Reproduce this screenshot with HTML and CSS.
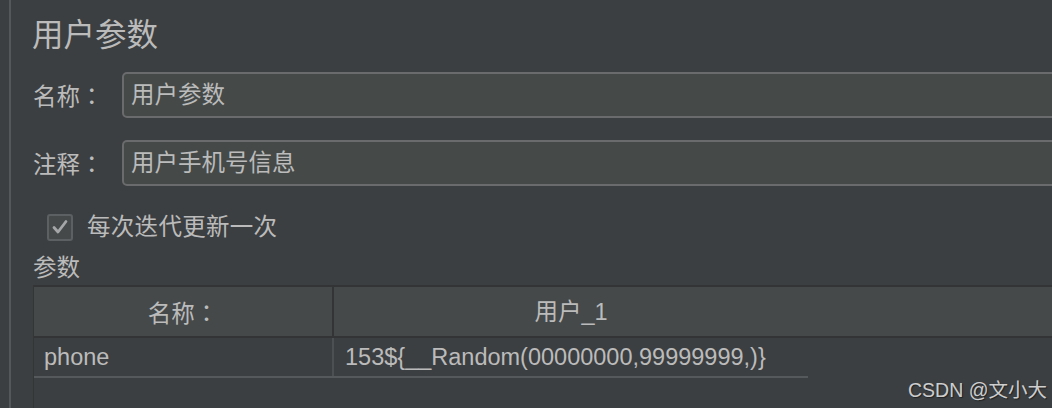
FILE: index.html
```html
<!DOCTYPE html>
<html lang="zh">
<head>
<meta charset="utf-8">
<title>用户参数</title>
<link rel="stylesheet" href="styles.css">
</head>
<body>
<div class="page">
  <div class="panel">
    <h1 class="title">用户参数</h1>
    <div class="field">
      <span class="label">名称<span class="colon">：</span></span>
      <div class="input">用户参数</div>
    </div>
    <div class="field field-second">
      <span class="label">注释<span class="colon">：</span></span>
      <div class="input">用户手机号信息</div>
    </div>
    <div class="check-row">
      <span class="checkbox">
        <svg width="18" height="18" viewBox="0 0 18 18"><path d="M3 9.5 L7 14 L15 3.5" fill="none" stroke="#a4a6a7" stroke-width="2.8" stroke-linecap="round" stroke-linejoin="round"/></svg>
      </span>
      <span class="check-label">每次迭代更新一次</span>
    </div>
    <div class="section">参数</div>
    <div class="table">
      <div class="thead">
        <div class="th th-name">名称<span class="colon">：</span></div>
        <div class="th th-user">用户_1</div>
        <div class="th th-rest"></div>
      </div>
      <div class="trow">
        <div class="td td-name">phone</div>
        <div class="td td-user">153${__Random(00000000,99999999,)}</div>
      </div>
    </div>
  </div>
  <div class="watermark">CSDN @文小大</div>
</div>
</body>
</html>
```

FILE: styles.css
```css
* { box-sizing: border-box; }
html, body {
  margin: 0;
  padding: 0;
  background: #3c3f41;
}
.page {
  position: relative;
  width: 1052px;
  height: 408px;
  overflow: hidden;
  background: #3c3f41;
  font-family: "Liberation Sans", "Noto Sans CJK SC", sans-serif;
  color: #bbbbbb;
}
.colon {
  font-family: "Noto Sans CJK TC", sans-serif;
  display: inline-block;
}
.panel {
  margin-left: 9px;
  height: 408px;
  border-left: 2px solid #55585a;
  padding-left: 21px;
  display: flex;
  flex-direction: column;
}
.title {
  margin: 17px 0 0 0;
  font-size: 31.5px;
  font-weight: normal;
  line-height: 36px;
  height: 36px;
}
.field {
  display: flex;
  align-items: center;
  margin-top: 19px;
  width: 1100px;
}
.field-second { margin-top: 22px; }
.label {
  width: 90px;
  flex: none;
  font-size: 23.5px;
  line-height: 30px;
  padding-left: 1px;
  padding-top: 2px;
  white-space: nowrap;
}
.input {
  flex: 1;
  height: 46px;
  border: 2px solid #696b6d;
  border-radius: 5px;
  background: #454a49;
  padding-left: 7px;
  font-size: 23.5px;
  line-height: 43px;
  color: #bbbbbb;
}
.check-row {
  display: flex;
  align-items: center;
  margin-top: 27px;
  margin-left: 15px;
  height: 28px;
}
.checkbox {
  width: 26px;
  height: 27px;
  border: 2px solid #5d6062;
  border-radius: 3px;
  background: #45494a;
  display: flex;
  align-items: center;
  justify-content: center;
}
.check-label {
  margin-left: 14px;
  font-size: 23.5px;
  line-height: 28px;
  letter-spacing: 0.3px;
}
.section {
  margin-top: 15px;
  font-size: 23.5px;
  line-height: 25px;
  height: 29px;
  padding-left: 1px;
}
.table {
  margin-left: 1px;
  flex: 1;
  width: 1100px;
  border-left: 1px solid #333537;
}
.thead {
  display: flex;
  height: 53px;
  border-top: 2px solid #323436;
  border-bottom: 2px solid #323436;
  background: #45494a;
}
.th {
  font-size: 23.5px;
  line-height: 49px;
  text-align: center;
  padding-top: 1px;
  white-space: nowrap;
}
.th-name {
  width: 300px;
  border-right: 2px solid #323436;
}
.th-user { width: 474px; }
.th-rest { flex: 1; }
.trow {
  display: flex;
  width: 774px;
  height: 40px;
  border-bottom: 2px solid #56595b;
}
.td {
  font-size: 23.5px;
  line-height: 38px;
}
.td-name {
  width: 300px;
  padding-left: 10px;
  border-right: 2px solid #4d5052;
}
.td-user {
  flex: 1;
  padding-left: 11px;
}
.watermark {
  position: absolute;
  right: 5px;
  bottom: 6px;
  font-size: 19.5px;
  line-height: 24px;
  color: rgba(235, 235, 235, 0.85);
  text-shadow: 1px 1px 1px rgba(0, 0, 0, 0.45);
}
```
